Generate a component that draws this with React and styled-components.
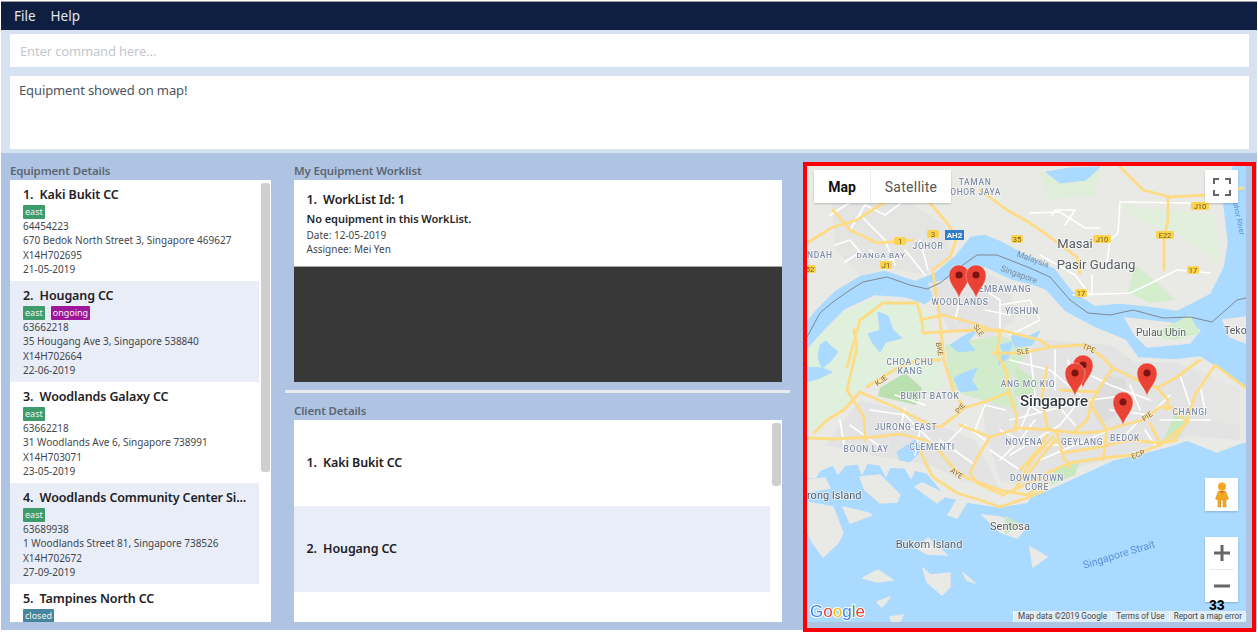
import styled, { createGlobalStyle } from "styled-components";

const GlobalStyle = createGlobalStyle`
  html, body {
    margin: 0;
    height: 100%;
    overflow: hidden;
    background: #fff;
    font-family: "Noto Sans", "Open Sans", sans-serif;
  }
`;

const Shell = styled.div`
  width: 1258px;
  height: 634px;
  box-sizing: border-box;
  padding: 1px 1px 0;
  display: flex;
  flex-direction: column;
`;

const MenuBar = styled.div`
  height: 28px;
  flex: none;
  border-top: 1px solid #9a9a9a;
  background: #0f1f42;
  display: flex;
  align-items: center;
  gap: 15px;
  padding-left: 13px;
  font-size: 13.5px;
  color: #e4e8ef;
`;

const CommandArea = styled.div`
  flex: none;
  background: #d6e1f1;
  padding: 4px 8px 4px 9px;
  display: flex;
  flex-direction: column;
  gap: 9px;
`;

const CommandInput = styled.div`
  height: 33px;
  background: #fff;
  padding-left: 10px;
  display: flex;
  align-items: center;
  font-size: 13px;
  letter-spacing: -0.15px;
  color: #c4c7cc;
`;

const ResultBox = styled.div`
  height: 73px;
  box-sizing: border-box;
  background: #fff;
  padding: 5px 9px;
  font-size: 13px;
  letter-spacing: -0.12px;
  color: #4c5560;
`;

const Panels = styled.div`
  height: 477px;
  flex: none;
  background: #afc4e3;
  padding-left: 9px;
  display: flex;
  align-items: flex-start;
`;

const Column = styled.div`
  width: ${(p) => p.$width}px;
  margin-right: ${(p) => p.$gap}px;
  flex: none;
  padding-top: 9px;
`;

const PanelLabel = styled.div`
  height: 18px;
  padding-left: ${(p) => p.$inset || 0}px;
  font-size: 11.5px;
  line-height: 18px;
  font-weight: 600;
  letter-spacing: -0.15px;
  color: #5d6673;
`;

const ListBox = styled.div`
  position: relative;
  height: ${(p) => p.$height}px;
  margin: 0 ${(p) => p.$inset || 0}px;
  background: #fff;
  overflow: hidden;
`;

const ScrollThumb = styled.div`
  position: absolute;
  right: 1px;
  top: 3px;
  width: 9px;
  height: ${(p) => p.$height}px;
  border-radius: 3px;
  background: #cfcfcf;
`;

const EquipmentCell = styled.div`
  width: 249px;
  height: 101px;
  box-sizing: border-box;
  padding: 6px 0 0 13px;
  background: ${(p) => (p.$alt ? "#e8edf7" : "#fff")};
`;

const CellTitle = styled.div`
  font-size: 12.5px;
  line-height: 18px;
  font-weight: 600;
  letter-spacing: -0.12px;
  color: #1e2125;
  white-space: pre;
`;

const TagRow = styled.div`
  display: flex;
  gap: 6px;
  margin-top: 1px;
`;

const Tag = styled.span`
  height: 14px;
  padding: 0 2px;
  border-radius: 1px;
  background: ${(p) => p.$bg};
  color: #f0f3f0;
  font-size: 9px;
  line-height: 14px;
`;

const InfoLine = styled.div`
  font-size: 10px;
  line-height: 14.4px;
  color: #43474d;
  white-space: nowrap;
`;

const WorklistCell = styled.div`
  height: 86px;
  box-sizing: border-box;
  padding: 10px 0 0 13px;
`;

const WorklistTitle = styled(CellTitle)`
  line-height: 20px;
`;

const WorklistNote = styled.div`
  font-size: 11px;
  line-height: 18px;
  font-weight: 600;
  letter-spacing: -0.05px;
  color: #24272b;
`;

const DarkArea = styled.div`
  height: 116px;
  margin: 0 8px 0 9px;
  background: #383838;
  border-top: 1px solid #a8a8a8;
  box-sizing: border-box;
`;

const Divider = styled.div`
  height: 3px;
  margin: 8px 0 9px;
  background: #e9ebee;
`;

const ClientCell = styled.div`
  width: 476px;
  height: 86px;
  box-sizing: border-box;
  padding-left: 13px;
  display: flex;
  align-items: center;
  background: ${(p) => (p.$alt ? "#e8edf7" : "#fff")};
`;

const MapFrame = styled.div`
  width: 453px;
  height: 470px;
  box-sizing: border-box;
  margin-top: 9px;
  border: 4px solid #fb0007;
  padding: 0 6px 6px 0;
`;

const MapCanvas = styled.div`
  position: relative;
  width: 439px;
  height: 456px;
  overflow: hidden;
  background: #aadaff;
  font-family: Roboto, sans-serif;

  svg.base {
    display: block;
    filter: blur(0.45px);
  }
`;

const MapControl = styled.div`
  position: absolute;
  background: #fff;
  box-shadow: 0 1px 2px rgba(0, 0, 0, 0.2);
  display: flex;
  align-items: center;
  justify-content: center;
`;

const MapTypes = styled(MapControl)`
  left: 7px;
  top: 4px;
  height: 33px;
`;

const MapType = styled.div`
  height: 33px;
  width: ${(p) => p.$width}px;
  box-sizing: border-box;
  display: flex;
  align-items: center;
  justify-content: center;
  font-size: 14px;
  font-weight: ${(p) => (p.$active ? 700 : 400)};
  letter-spacing: ${(p) => (p.$active ? 0 : 0.25)}px;
  color: ${(p) => (p.$active ? "#111" : "#565656")};
  border-right: ${(p) => (p.$active ? "1px solid #eee" : "none")};
`;

const SquareControl = styled(MapControl)`
  left: 398px;
  top: ${(p) => p.$top}px;
  width: 33px;
  height: 33px;
`;

const ZoomControl = styled(MapControl)`
  left: 398px;
  top: 371px;
  width: 33px;
  height: 65px;
  flex-direction: column;
`;

const ZoomButton = styled.div`
  height: 32px;
  display: flex;
  align-items: center;
  justify-content: center;
`;

const ZoomRule = styled.div`
  width: 24px;
  height: 1px;
  flex: none;
  background: #e6e6e6;
`;

const SlideNumber = styled.div`
  position: absolute;
  left: 402px;
  top: 431px;
  font-family: "Liberation Sans", sans-serif;
  font-size: 14px;
  line-height: 16px;
  font-weight: 700;
  color: #000;
`;

const Attribution = styled.div`
  position: absolute;
  right: 0;
  bottom: 0;
  height: 11px;
  display: flex;
  background: rgba(245, 245, 245, 0.72);
  font-size: 8.2px;
  line-height: 11px;
  color: #444;
  white-space: nowrap;

  span {
    padding: 0 4px;
    border-left: 1px solid #fff;
  }
`;

const equipment = [
  { title: "1.  Kaki Bukit CC", tags: ["east"], lines: ["64454223", "670 Bedok North Street 3, Singapore 469627", "X14H702695", "21-05-2019"] },
  { title: "2.  Hougang CC", tags: ["east", "ongoing"], lines: ["63662218", "35 Hougang Ave 3, Singapore 538840", "X14H702664", "22-06-2019"] },
  { title: "3.  Woodlands Galaxy CC", tags: ["east"], lines: ["63662218", "31 Woodlands Ave 6, Singapore 738991", "X14H703071", "23-05-2019"] },
  { title: "4.  Woodlands Community Center Si...", tags: ["east"], lines: ["63689938", "1 Woodlands Street 81, Singapore 738526", "X14H702672", "27-09-2019"] },
  { title: "5.  Tampines North CC", tags: ["closed"], lines: [] },
];

const tagColors = { east: "#3e9b6c", ongoing: "#a0169b", closed: "#45869f" };

const northLand = "807,166 1232,166 1222,200 1227,243 1223,267 1210,293 1177,310 1150,306 1120,303 1095,305 1072,290 1055,268 1030,256 1000,240 985,234 970,236 955,255 935,272 915,280 885,270 860,275 835,290 815,310 807,320";
const southLand = "807,350 825,330 845,310 875,296 905,298 925,305 945,290 965,280 985,268 1010,280 1030,285 1045,290 1065,312 1095,328 1125,340 1138,358 1175,360 1200,357 1246,387 1246,442 1240,443 1217,452 1187,440 1173,445 1143,453 1113,460 1080,475 1063,483 1030,497 1027,502 1000,507 973,503 947,497 927,473 915,470 911,478 905,468 890,467 886,476 880,465 867,463 862,474 858,464 845,465 838,474 833,465 820,470 815,478 807,477";

const islands = [
  "807,502 833,507 843,533 838,543 823,557 813,543 807,532",
  "807,480 825,478 830,488 807,492",
  "843,507 868,513 872,515 850,523",
  "860,477 880,475 900,495 897,502 880,503 865,490",
  "915,487 922,483 947,495 937,503",
  "957,500 967,502 957,518 948,515",
  "982,515 1000,517 1027,527 1017,538 1000,532",
  "917,548 928,538 947,555 927,554",
  "863,578 878,570 893,580 877,582",
  "877,602 890,597 882,607",
  "890,617 903,615 900,622 892,622",
  "923,568 930,575 950,573 950,587 942,595 927,582",
  "963,573 975,583 967,580",
  "1125,318 1170,323 1200,330 1190,343 1147,347 1135,335",
  "1223,320 1246,317 1246,343 1230,337",
  "1030,547 1047,557 1033,567",
  "1240,435 1246,432 1246,442",
];

const urban = [
  { pts: "860,400 900,410 940,425 975,440 1000,490 960,480 930,465 870,455 825,445 840,425", fill: "#e3e3e3" },
  { pts: "990,345 1050,340 1110,345 1135,362 1175,362 1240,390 1240,440 1190,436 1130,452 1070,470 1040,490 1000,480 985,430 980,380", fill: "#e3e3e3" },
  { pts: "928,283 985,272 1010,285 1015,320 990,338 950,330 935,305", fill: "#e3e3e3" },
  { pts: "1105,375 1125,378 1128,395 1115,415 1100,425 1092,410", fill: "#dcdcdc" },
  { pts: "1200,370 1240,392 1240,425 1205,420", fill: "#e6e6e4" },
  { pts: "832,200 890,190 945,225 950,255 925,275 890,268 860,275 835,250", fill: "#e4e4e3" },
];

const greens = [
  { pts: "807,350 845,310 875,298 925,308 935,345 945,385 930,395 905,370 880,375 860,390 845,405 815,428 807,432", fill: "#dff0dc" },
  { pts: "880,388 905,373 922,388 916,405 878,396", fill: "#b9e0ae" },
  { pts: "945,345 1000,335 1030,348 1010,380 1020,410 1000,405 965,395 950,385", fill: "#d2ebca" },
  { pts: "1135,265 1160,285 1175,300 1150,303 1128,292", fill: "#d3edcd" },
  { pts: "1120,205 1215,215 1220,265 1180,235 1140,222", fill: "#e3efdd" },
  { pts: "807,170 850,170 835,200 807,190", fill: "#e4efdf" },
  { pts: "1040,172 1100,170 1095,195 1050,200", fill: "#deeed8" },
  { pts: "1190,315 1200,333 1175,340 1150,335", fill: "#d3edcd" },
  { pts: "1175,415 1190,418 1178,438 1163,440", fill: "#c8e8c0" },
  { pts: "1055,470 1080,460 1075,475 1050,485", fill: "#c8e8c0" },
  { pts: "1005,515 1020,525 1005,535", fill: "#c8e8c0" },
  { pts: "1015,366 1040,382 1030,400 1015,395", fill: "#cbe9c2" },
];

const inlets = [
  "820,345 826,341 832,347 838,352 830,362 822,368 818,358",
  "807,367 822,368 832,372 820,378 807,382",
  "878,312 888,316 893,330 902,338 886,342 880,352 872,342 868,334 880,330",
  "950,345 962,337 977,330 968,342 975,350 958,352",
  "954,378 966,372 977,368 972,380 978,390 960,392",
  "1010,333 1025,338 1040,331 1032,345 1015,347",
  "1046,172 1070,168 1100,167 1086,180 1060,183",
  "1000,345 1012,342 1008,358 998,365 1003,352",
  "897,452 915,440 922,450 910,462 900,460",
];

const yellowRoads = [
  "993,353 1023,353 1050,347 1083,345 1100,355 1113,368 1137,380 1157,388 1168,400 1167,410",
  "1123,425 1143,420 1160,407 1173,408 1187,422 1175,438",
  "960,425 990,437 1020,428 1050,430 1077,433 1100,432 1123,425",
  "1047,473 1070,463 1103,458 1133,455 1160,445 1187,423 1195,395 1215,365 1246,388",
  "807,438 833,439 875,437 900,434 925,440 940,452 955,470 967,478 1000,490 1027,495 1047,482",
  "933,477 957,493 980,500 1000,507 1027,498 1045,490",
  "920,450 926,464 933,477",
  "933,273 940,320 944,360 954,393 964,407",
  "814,433 827,420 844,410 860,392 874,398 897,408 924,422 940,427 954,417 964,408 990,400 1007,393",
  "867,387 894,370 917,360 940,360",
  "854,330 857,347 847,390 864,417 865,440",
  "847,367 860,320 883,303 917,303 922,320 923,333 973,330 1000,330",
  "920,320 943,315 973,323 1000,333 997,353 1007,373 1008,390 1017,417 1015,430",
  "807,243 833,227 857,220 883,203 907,197",
  "833,210 850,230 877,243 913,240",
  "930,203 947,223 957,237 950,257 933,270",
  "980,190 1007,210 1030,223 1050,237 1077,257 1080,273",
  "1120,167 1143,190 1170,197 1207,195 1243,188",
  "1168,197 1168,220 1164,240 1164,270",
  "1047,367 1042,397 1047,427 1057,433 1063,457 1070,467",
  "1113,368 1100,387 1093,400 1087,420 1073,433",
  "1060,390 1098,392",
  "990,437 980,453 970,473 977,483 1003,495",
  "1053,437 1033,458 1013,493",
  "1063,453 1100,447 1130,440 1160,443 1177,440",
  "1088,400 1107,430 1103,460",
  "1177,377 1200,360",
  "1157,388 1177,377",
  "1150,423 1160,443",
  "1000,330 1040,340 1050,347",
  "1047,435 1040,448 1020,470",
  "1056,440 1045,452 1025,478",
  "1003,495 1030,482 1045,478",
];

const whiteRoads = [
  "1120,202 1190,203",
  "1120,202 1118,233 1110,240 1106,270",
  "1143,287 1177,270 1210,273",
  "1073,295 1130,293 1143,287",
  "1030,213 1060,212 1085,228 1100,228",
  "1092,275 1092,295",
  "1040,255 1075,275 1090,295",
  "1052,215 1055,210 1075,210 1065,225",
  "830,215 870,190 895,185",
  "850,230 865,205 885,215 905,200 925,185",
  "860,215 885,240 895,265",
  "835,245 850,240 860,252 845,262",
  "870,250 885,262 905,255",
  "920,240 928,270",
  "905,250 925,275",
  "975,270 985,290 1000,300 1000,330",
  "1000,305 1030,300 1040,320 1010,335",
  "960,300 955,320",
  "985,310 1010,315",
  "870,410 905,415 930,440",
  "880,425 920,430 915,455",
  "850,425 885,450",
  "840,420 845,450",
  "895,395 925,405",
  "905,408 900,430",
  "1010,360 1050,370 1080,395",
  "1010,420 1050,410 1090,400 1130,395",
  "1000,430 1030,445 1060,445",
  "1080,370 1110,385 1150,400",
  "1110,410 1150,415 1170,395",
  "1120,440 1140,420",
  "1160,420 1210,420",
  "1040,460 1075,445 1110,430",
  "1010,455 1035,440 1060,425 1080,400",
  "1180,375 1190,405",
  "1030,350 1035,395 1020,430",
  "990,450 1020,470",
  "940,440 975,465",
  "945,445 965,425 985,440",
  "1055,350 1055,390",
  "1020,400 1040,412",
  "1060,408 1075,425",
  "1130,385 1140,410",
  "1068,360 1072,378",
  "1000,460 1020,440 1035,420",
  "975,430 985,405 1005,410",
  "1145,430 1155,445",
  "1200,385 1205,410",
];

const boundary = "807,337 820,313 833,302 850,290 863,282 887,277 910,285 927,289 940,283 960,267 977,255 997,255 1030,268 1050,277 1070,300 1088,313 1110,315 1133,310 1163,318 1190,317 1212,322 1237,300 1246,298";

const shields = [
  { x: 900, y: 241, t: "1" }, { x: 933, y: 234, t: "3" }, { x: 1017, y: 239, t: "35" },
  { x: 886, y: 265, t: "J1" }, { x: 810, y: 269, t: "52" }, { x: 1200, y: 206, t: "J10" },
  { x: 1102, y: 239, t: "J10" }, { x: 1165, y: 235, t: "E22" }, { x: 1193, y: 270, t: "17" },
  { x: 1081, y: 293, t: "17" },
];

const areaLabels = [
  { x: 975, y: 185, t: "TAMAN" }, { x: 973, y: 194.5, t: "JOHOR JAYA" }, { x: 807, y: 258, t: "NDAH", a: "start" },
  { x: 881, y: 258, t: "DANGA BAY", s: 8 }, { x: 928, y: 249, t: "JOHOR" }, { x: 960, y: 305, t: "WOODLANDS" },
  { x: 1002, y: 292, t: "SEMBAWANG" }, { x: 1022, y: 314, t: "YISHUN" }, { x: 910, y: 365, t: "CHOA CHU" },
  { x: 910, y: 374, t: "KANG" }, { x: 930, y: 399, t: "BUKIT BATOK" }, { x: 1028, y: 387, t: "ANG MO KIO" },
  { x: 906, y: 430, t: "JURONG EAST" }, { x: 866, y: 452, t: "BOON LAY" }, { x: 932, y: 450, t: "CLEMENTI" },
  { x: 1024, y: 445, t: "NOVENA" }, { x: 1082, y: 445, t: "GEYLANG" }, { x: 1125, y: 441, t: "BEDOK" },
  { x: 1190, y: 415, t: "CHANGI" }, { x: 1037, y: 481, t: "DOWNTOWN" }, { x: 1037, y: 489.5, t: "CORE" },
];

const placeLabels = [
  { x: 1075, y: 248, t: "Masai", s: 13 }, { x: 1096, y: 269, t: "Pasir Gudang", s: 13.2 },
  { x: 1161, y: 336, t: "Pulau Ubin", s: 10.5 }, { x: 1224, y: 334, t: "Teko", s: 10.5, a: "start" },
  { x: 807, y: 499, t: "rong Island", s: 11, a: "start" }, { x: 929, y: 548, t: "Bukom Island", s: 11 },
  { x: 1010, y: 530, t: "Sentosa", s: 11 },
];

const roadMarks = [
  { x: 881, y: 383, t: "KJE", r: -35 }, { x: 940, y: 352, t: "BKE", r: 80 }, { x: 979, y: 333, t: "SLE", r: 55 },
  { x: 1023, y: 354, t: "SLE", r: -8 }, { x: 1089, y: 351, t: "TPE", r: 20 }, { x: 957, y: 476, t: "AYE", r: 35 },
  { x: 960, y: 411, t: "PIE", r: -50 }, { x: 1147, y: 419, t: "PIE", r: -35 }, { x: 1138, y: 457, t: "ECP", r: -20 },
];

const pins = [
  { x: 959, y: 298 }, { x: 976, y: 298 }, { x: 1083, y: 388 }, { x: 1075, y: 396 }, { x: 1147, y: 396 }, { x: 1123, y: 425 },
];

const MapBase = () => (
  <svg className="base" width="439" height="456" viewBox="807 166 439 456">
    <rect x="807" y="166" width="439" height="456" fill="#aadaff" />
    <g fill="#e9e9e5" stroke="#e9e9e5" strokeWidth="1.5" strokeLinejoin="round">
      <polygon points={northLand} />
      <polygon points={southLand} />
      {islands.map((p) => (
        <polygon key={p} points={p} />
      ))}
    </g>
    {urban.map((u) => (
      <polygon key={u.pts} points={u.pts} fill={u.fill} />
    ))}
    {greens.map((g) => (
      <polygon key={g.pts} points={g.pts} fill={g.fill} />
    ))}
    <g fill="#aadaff" stroke="#aadaff" strokeLinejoin="round">
      {inlets.map((p) => (
        <polygon key={p} points={p} />
      ))}
    </g>
    <g fill="none" strokeLinejoin="round" strokeLinecap="round">
      {whiteRoads.map((p) => (
        <polyline key={p} points={p} stroke="#fff" strokeWidth="1.6" />
      ))}
      {yellowRoads.map((p) => (
        <polyline key={p} points={p} stroke="#fedb85" strokeWidth="2.8" />
      ))}
      <polyline points={boundary} stroke="#7f8890" strokeWidth="1" />
    </g>

    {shields.map((s) => (
      <g key={`${s.x}-${s.y}`}>
        <rect x={s.x - (s.t.length > 2 ? 9 : 6)} y={s.y - 4} width={s.t.length > 2 ? 18 : 12} height="8" rx="2" fill="#fbd34c" />
        <text x={s.x} y={s.y + 3} textAnchor="middle" fontSize="7.5" fill="#6b5a1e">{s.t}</text>
      </g>
    ))}
    <rect x="945" y="230" width="19" height="10" fill="#2f7ccb" />
    <text x="954.5" y="238" textAnchor="middle" fontSize="8" fontWeight="700" fill="#fff">AH2</text>

    {areaLabels.map((l) => (
      <text key={l.t} x={l.x} y={l.y} textAnchor={l.a || "middle"} fontSize={l.s || 8.5} fontWeight="500" letterSpacing="0.6" fill="#7d8ba5" stroke="#fff" strokeWidth="1.2" paintOrder="stroke">{l.t}</text>
    ))}
    {placeLabels.map((l) => (
      <text key={l.t} x={l.x} y={l.y} textAnchor={l.a || "middle"} fontSize={l.s} fill="#565c63" stroke="#fff" strokeOpacity="0.7" strokeWidth="1.5" paintOrder="stroke">{l.t}</text>
    ))}
    {roadMarks.map((m) => (
      <text key={`${m.x}-${m.t}`} x={m.x} y={m.y} textAnchor="middle" fontSize="7.5" fill="#85642a" stroke="#fff3c9" strokeWidth="1" paintOrder="stroke" transform={`rotate(${m.r} ${m.x} ${m.y - 3})`}>{m.t}</text>
    ))}

    <text x="1054" y="406" textAnchor="middle" fontSize="15" fontWeight="500" fill="#33383e" stroke="#fff" strokeWidth="2" paintOrder="stroke">Singapore</text>
    <text x="1119" y="558" textAnchor="middle" fontSize="10.5" fill="#5c93d8" transform="rotate(-17 1119 555)">Singapore Strait</text>
    <text x="1236" y="217" textAnchor="middle" fontSize="7.5" fill="#5c93d8" transform="rotate(78 1236 217)">Johor River</text>
    <text x="1032" y="262" textAnchor="middle" fontSize="8.5" fill="#7f8c9c" transform="rotate(20 1032 262)">Malaysia</text>
    <text x="1018" y="277" textAnchor="middle" fontSize="8.5" fill="#7f8c9c" transform="rotate(20 1018 277)">Singapore</text>

    {pins.map((p) => (
      <g key={`${p.x}-${p.y}`} transform={`translate(${p.x} ${p.y})`}>
        <path d="M0 0C-1.8-8-10-13-10-23A10 10 0 1 1 10-23C10-13 1.8-8 0 0Z" fill="#ea4335" stroke="#f4f4f4" strokeOpacity="0.5" strokeWidth="0.7" />
        <circle cy="-23" r="3.6" fill="#7c1512" />
      </g>
    ))}

    <text x="810" y="617" fontFamily="Liberation Sans, sans-serif" fontSize="17" stroke="#fff" strokeWidth="2" paintOrder="stroke">
      <tspan fill="#4285f4">G</tspan>
      <tspan fill="#ea4335">o</tspan>
      <tspan fill="#fbbc05">o</tspan>
      <tspan fill="#4285f4">g</tspan>
      <tspan fill="#34a853">l</tspan>
      <tspan fill="#ea4335">e</tspan>
    </text>
  </svg>
);

const App = () => (
  <>
    <GlobalStyle />
    <Shell>
      <MenuBar>
        <span>File</span>
        <span>Help</span>
      </MenuBar>
      <CommandArea>
        <CommandInput>Enter command here...</CommandInput>
        <ResultBox>Equipment showed on map!</ResultBox>
      </CommandArea>
      <Panels>
        <Column $width={261} $gap={14}>
          <PanelLabel>Equipment Details</PanelLabel>
          <ListBox $height={442}>
            {equipment.map((item, i) => (
              <EquipmentCell key={item.title} $alt={i % 2 === 1}>
                <CellTitle>{item.title}</CellTitle>
                <TagRow>
                  {item.tags.map((tag) => (
                    <Tag key={tag} $bg={tagColors[tag]}>{tag}</Tag>
                  ))}
                </TagRow>
                {item.lines.map((line) => (
                  <InfoLine key={line}>{line}</InfoLine>
                ))}
              </EquipmentCell>
            ))}
            <ScrollThumb $height={289} />
          </ListBox>
        </Column>
        <Column $width={505} $gap={13}>
          <PanelLabel $inset={9}>My Equipment Worklist</PanelLabel>
          <ListBox $height={86} $inset={8.5}>
            <WorklistCell>
              <WorklistTitle>1.  WorkList Id: 1</WorklistTitle>
              <WorklistNote>No equipment in this WorkList.</WorklistNote>
              <InfoLine>Date: 12-05-2019</InfoLine>
              <InfoLine>Assignee: Mei Yen</InfoLine>
            </WorklistCell>
          </ListBox>
          <DarkArea />
          <Divider />
          <PanelLabel $inset={9}>Client Details</PanelLabel>
          <ListBox $height={202} $inset={8.5}>
            <ClientCell><CellTitle>1.  Kaki Bukit CC</CellTitle></ClientCell>
            <ClientCell $alt><CellTitle>2.  Hougang CC</CellTitle></ClientCell>
            <ScrollThumb $height={63} />
          </ListBox>
        </Column>
        <MapFrame>
          <MapCanvas>
            <MapBase />
            <MapTypes>
              <MapType $active $width={57}>Map</MapType>
              <MapType $width={80}>Satellite</MapType>
            </MapTypes>
            <SquareControl $top={4}>
              <svg width="18" height="18" viewBox="0 0 18 18" fill="none" stroke="#666" strokeWidth="2">
                <path d="M1 6V1H6M12 1H17V6M17 12V17H12M6 17H1V12" />
              </svg>
            </SquareControl>
            <SquareControl $top={312}>
              <svg width="14" height="26" viewBox="0 0 14 26">
                <circle cx="7" cy="4.5" r="4" fill="#f5a623" />
                <path d="M3.5 9H10.5L13.5 17L11 18V25H8V18H6V25H3V18L.5 17Z" fill="#f5a623" stroke="#c98a12" strokeWidth="0.5" />
                <path d="M5.5 9L7 12L8.5 9Z" fill="#d9502e" />
              </svg>
            </SquareControl>
            <ZoomControl>
              <ZoomButton>
                <svg width="16" height="16" viewBox="0 0 16 16"><path d="M6.5 0H9.5V6.5H16V9.5H9.5V16H6.5V9.5H0V6.5H6.5Z" fill="#666" /></svg>
              </ZoomButton>
              <ZoomRule />
              <ZoomButton>
                <svg width="16" height="16" viewBox="0 0 16 16"><rect y="6.5" width="16" height="3" fill="#666" /></svg>
              </ZoomButton>
            </ZoomControl>
            <SlideNumber>33</SlideNumber>
            <Attribution>
              <span>Map data ©2019 Google</span>
              <span>Terms of Use</span>
              <span>Report a map error</span>
            </Attribution>
          </MapCanvas>
        </MapFrame>
      </Panels>
    </Shell>
  </>
);

export default App;
